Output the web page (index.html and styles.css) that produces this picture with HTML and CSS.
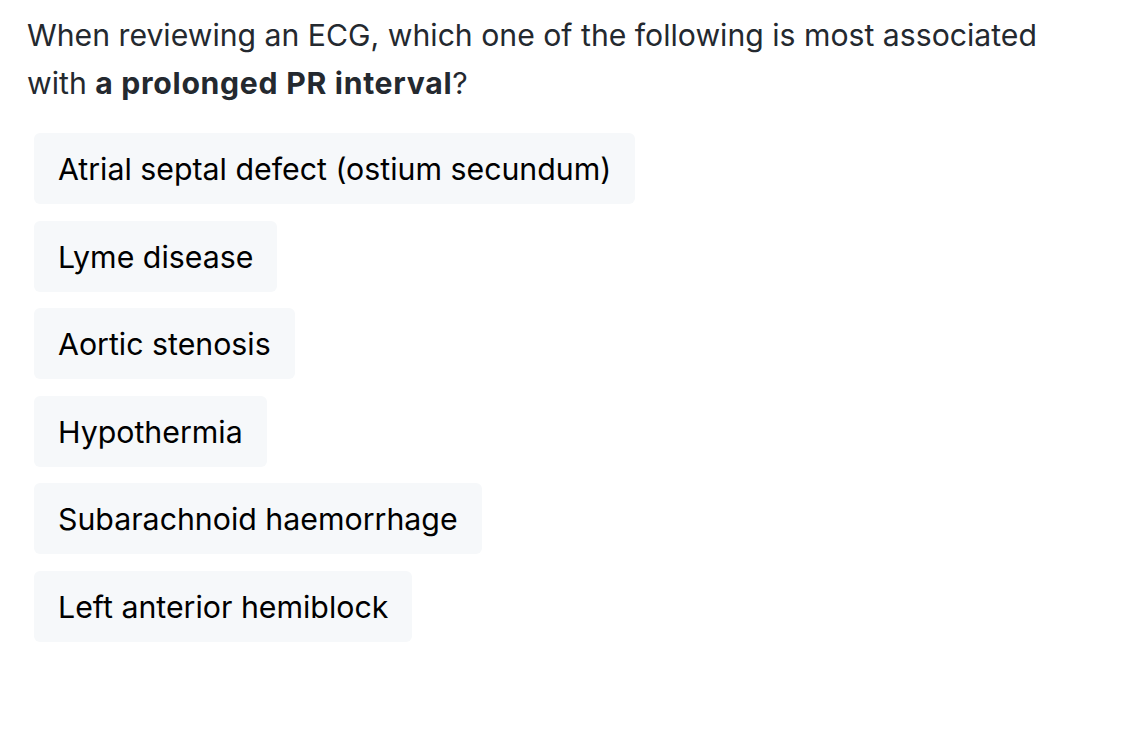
FILE: index.html
```html
<!DOCTYPE html>
<html>
<head>
<meta charset="utf-8">
<link rel="stylesheet" href="styles.css">
</head>
<body>
<div class="quiz">
  <p class="question">When reviewing an ECG, which one of the following is most associated with <strong>a prolonged PR interval</strong>?</p>
  <div class="options">
    <div class="option">Atrial septal defect (ostium secundum)</div>
    <div class="option">Lyme disease</div>
    <div class="option">Aortic stenosis</div>
    <div class="option">Hypothermia</div>
    <div class="option">Subarachnoid haemorrhage</div>
    <div class="option">Left anterior hemiblock</div>
  </div>
</div>
</body>
</html>
```
FILE: styles.css
```css
html, body {
  margin: 0;
  padding: 0;
  background: #ffffff;
}
body {
  font-family: Inter, "Noto Sans", sans-serif;
}
.quiz {
  padding: 11px 27px;
}
.question {
  margin: 0 0 26px 0;
  font-size: 30.2px;
  line-height: 48px;
  color: #24292f;
  max-width: 1030px;
}
.question strong {
  font-weight: 700;
  letter-spacing: 0.7px;
}
.options {
  display: flex;
  flex-direction: column;
  align-items: flex-start;
  gap: 16.5px;
  margin-left: 7px;
}
.option {
  background: #f6f8fa;
  border-radius: 6px;
  padding: 13px 24px 11px;
  font-size: 30.3px;
  line-height: 47px;
  color: #000000;
}
```
